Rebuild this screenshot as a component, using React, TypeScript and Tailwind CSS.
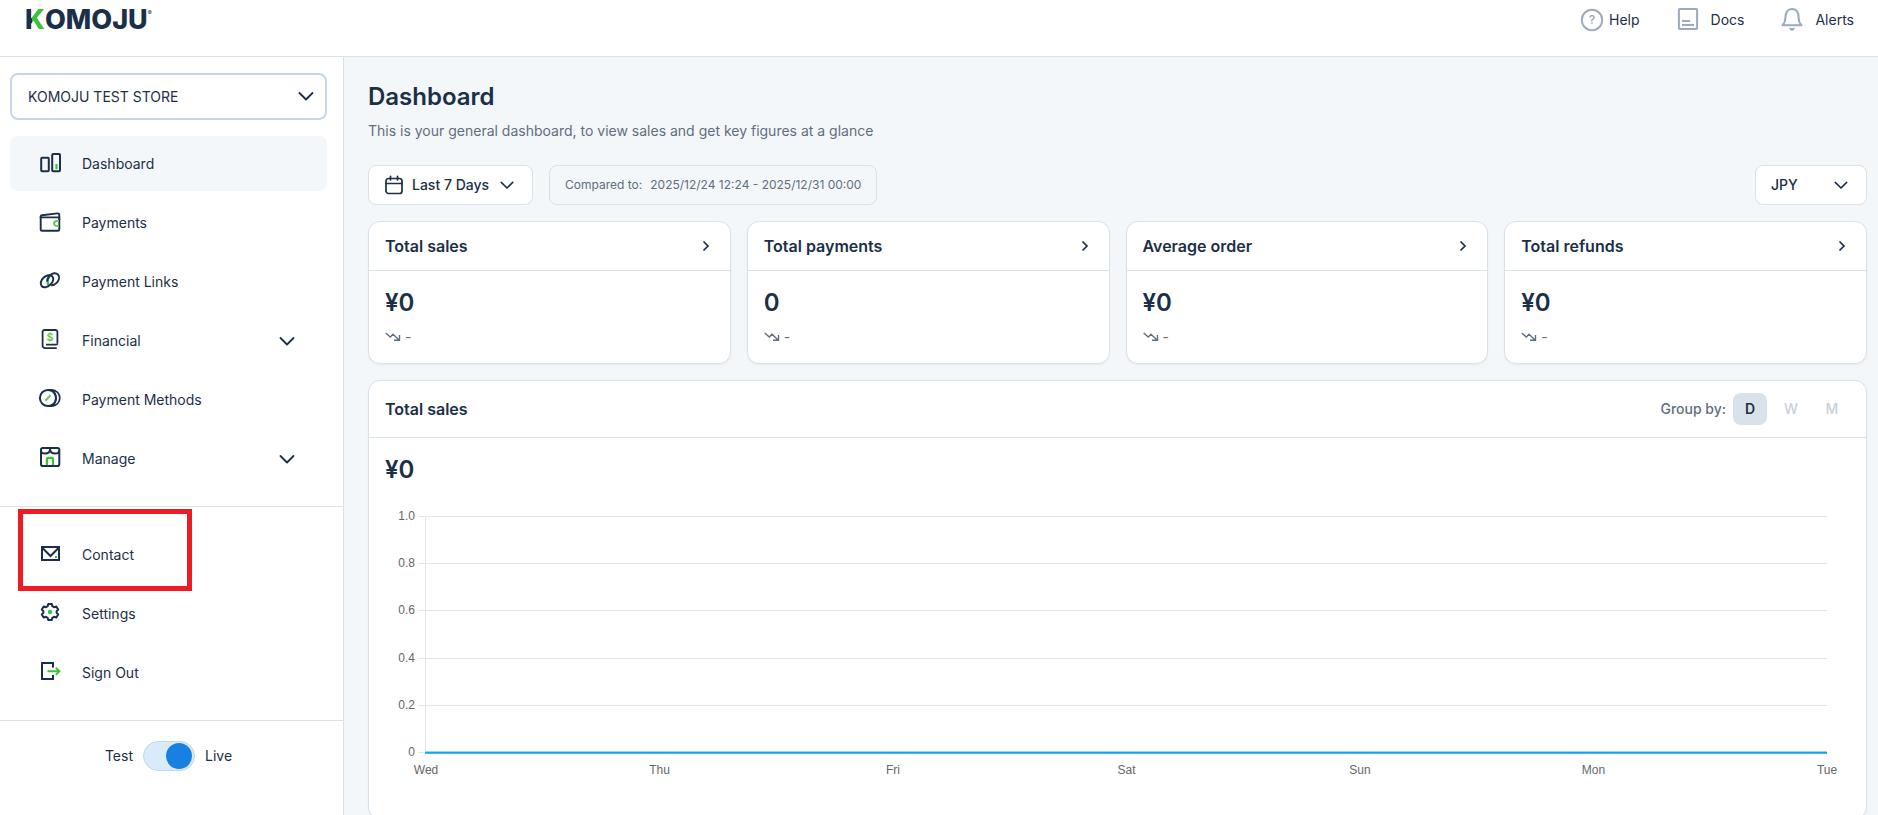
import React, { useState } from 'react';

const NAVY = '#1b2f48';
const GREEN = '#3cc13b';

interface IconProps {
  className?: string;
}

const ChevronDown: React.FC<IconProps> = ({ className }) => (
  <svg className={className} viewBox="0 0 16 16" fill="none" stroke="currentColor" strokeWidth="1.8" strokeLinecap="round" strokeLinejoin="round" aria-hidden="true">
    <path d="M1.500 5L8 11.500 14.500 5" />
  </svg>
);

const NavSvg: React.FC<{ children: React.ReactNode }> = ({ children }) => (
  <svg className="h-6 w-6 shrink-0" viewBox="0 0 24 24" fill="none" stroke={NAVY} strokeWidth="2" aria-hidden="true">
    {children}
  </svg>
);

const DashboardIcon = () => (
  <NavSvg>
    <rect x="3.2" y="6.8" width="7.6" height="13.4" rx="1" />
    <rect x="14.2" y="3" width="7.8" height="17.2" rx="1" />
    <path d="M18.500 13v5.200" stroke={GREEN} strokeWidth="2.200" />
  </NavSvg>
);

const PaymentsIcon = () => (
  <NavSvg>
    <path d="M2.700 7.400v12a1.400 1.400 0 0 0 1.400 1.400h15.800a1.400 1.400 0 0 0 1.400-1.400V8.800a1.400 1.400 0 0 0-1.400-1.400z" strokeWidth="1.900" />
    <path d="M2.700 8.200V6.600c0-.7.500-1.200 1.200-1.300L19.600 3.400c1-.1 1.700.5 1.700 1.400v5" strokeWidth="1.900" />
    <path d="M21 10.900h-2.400a2.500 2.500 0 0 0 0 5H21" stroke="#6cc651" />
  </NavSvg>
);

const LinksIcon = () => (
  <NavSvg>
    <path d="M10.600 8.200c-1.200 1.900-1.500 5.600.3 8.200" stroke="#35c567" strokeWidth="2.600" />
    <ellipse cx="9" cy="12.200" rx="7.200" ry="4.900" transform="rotate(-42 9 12.200)" />
    <path d="M13.200 16.300c2 .1 4-.9 5.700-2.700 2.300-2.500 2.900-6 1.100-8-1.900-2.100-5.500-1.600-8 .9-1.900 1.900-2.900 4.200-2.700 6.200" />
  </NavSvg>
);

const FinancialIcon = () => (
  <NavSvg>
    <path d="M19.400 15.200V3.800A1.800 1.800 0 0 0 17.600 2H6.400a1.800 1.800 0 0 0-1.800 1.800v13.900a2.500 2.500 0 0 0 2.500 2.500h11.700" strokeWidth="1.800" />
    <path d="M8 16.700h10c.8 0 1.400-.6 1.400-1.500" strokeWidth="1.800" />
    <text x="12" y="12.800" textAnchor="middle" fontFamily="Inter, sans-serif" fontSize="10.500" fontWeight="700" fill="#6cc651" stroke="none">$</text>
  </NavSvg>
);

const MethodsIcon = () => (
  <NavSvg>
    <circle cx="10" cy="11" r="8.100" />
    <path d="M10 2.900h3.700a8.100 8.100 0 0 1 0 16.200H10M14.300 3.400c2.300 1.500 3.500 4.200 3.500 7.600s-1.200 6.100-3.500 7.600" strokeWidth="1.700" />
    <path d="M7.300 13.700L12.500 8.300" stroke="#6cc651" />
  </NavSvg>
);

const ManageIcon = () => (
  <NavSvg>
    <rect x="3" y="2" width="18.300" height="18" rx="1.800" />
    <path d="M3 4.500c0 2 1.600 3 3.900 3 3 0 5.200-1.700 5.200-4.500 0 2.800 2.200 4.500 5.200 4.500 2.300 0 4-1 4-3" />
    <path d="M8.900 20v-7.100c0-.6.500-1.100 1.100-1.100h3.900c.6 0 1.100.5 1.100 1.100V20" stroke={GREEN} strokeWidth="2.200" />
    <path d="M4 20h16" />
  </NavSvg>
);

const ContactIcon = () => (
  <NavSvg>
    <rect x="4" y="5" width="17" height="13" />
    <path d="M4.500 6l8 8 8-8" />
    <rect x="17" y="14" width="2" height="2" fill={GREEN} stroke="none" />
  </NavSvg>
);

const SettingsIcon = () => (
  <NavSvg>
    <path
      d="M10.200 3h3.600l.5 2.200 1.700 1 2.300-.8 1.900 3.200-1.600 1.700v1.400l1.600 1.700-1.900 3.200-2.300-.8-1.700 1-.5 2.200h-3.600l-.5-2.200-1.700-1-2.300.8-1.900-3.200 1.600-1.700v-1.400L3.800 8.600l1.900-3.200 2.300.8 1.700-1z"
      strokeLinejoin="round"
    />
    <circle cx="12" cy="11" r="2.200" fill={GREEN} stroke="none" />
  </NavSvg>
);

const SignOutIcon = () => (
  <NavSvg>
    <path d="M15 7.500V3H4v16h11v-4" />
    <path d="M9.500 11.300H21M17.800 7.700l3.600 3.600-3.600 3.600" stroke={GREEN} strokeWidth="1.900" />
  </NavSvg>
);

const mainNav = [
  { label: 'Dashboard', icon: DashboardIcon, active: true },
  { label: 'Payments', icon: PaymentsIcon },
  { label: 'Payment Links', icon: LinksIcon },
  { label: 'Financial', icon: FinancialIcon, expandable: true },
  { label: 'Payment Methods', icon: MethodsIcon },
  { label: 'Manage', icon: ManageIcon, expandable: true },
];

const accountNav = [
  { label: 'Contact', icon: ContactIcon, highlighted: true },
  { label: 'Settings', icon: SettingsIcon },
  { label: 'Sign Out', icon: SignOutIcon },
];

interface NavItemProps {
  label: string;
  icon: React.FC;
  active?: boolean;
  expandable?: boolean;
  highlighted?: boolean;
}

const NavItem: React.FC<NavItemProps> = ({ label, icon: Icon, active, expandable, highlighted }) => {
  const classes = `flex w-full items-start gap-5 rounded-lg pt-[15px] pr-8 pb-[14px] pl-7 text-left text-sm leading-[26px] ${active ? 'bg-[#f3f7fa]' : ''}`;
  return (
    <li className="relative">
      {expandable ? (
        <button type="button" className={classes}>
          <Icon />
          <span className="flex-1">{label}</span>
          <ChevronDown className="h-4 w-4 self-center" />
        </button>
      ) : (
        <a href="#" className={classes}>
          <Icon />
          <span>{label}</span>
        </a>
      )}
      {highlighted && (
        <span className="pointer-events-none absolute -top-[18px] left-2 h-[82px] w-[174px] border-[5px] border-[#ed1c24]"></span>
      )}
    </li>
  );
};

const Sidebar = () => {
  const [live, setLive] = useState(true);

  return (
    <aside className="w-[344px] shrink-0 border-r border-[#d8e2eb] bg-white">
      <div className="pt-4 pr-4 pl-[10px]">
        <div className="relative">
          <select aria-label="Store" className="h-[47px] w-full appearance-none rounded-lg border-2 border-[#c8d5e2] bg-white px-4 text-sm">
            <option>KOMOJU TEST STORE</option>
          </select>
          <ChevronDown className="pointer-events-none absolute top-[15px] right-[13px] h-4 w-4" />
        </div>
      </div>
      <ul className="space-y-1 pt-4 pr-4 pb-5 pl-[10px]">
        {mainNav.map((item) => <NavItem key={item.label} {...item} />)}
      </ul>
      <ul className="space-y-1 border-t border-[#d8e2eb] pt-5 pr-4 pb-5 pl-[10px]">
        {accountNav.map((item) => <NavItem key={item.label} {...item} />)}
      </ul>
      <div className="flex items-center justify-center gap-[10px] border-t border-[#d8e2eb] pt-5 pr-[6px] text-sm">
        <span>Test</span>
        <input
          type="checkbox"
          role="switch"
          aria-label="Live mode"
          checked={live}
          onChange={(e) => setLive(e.target.checked)}
          className="h-[30px] w-[52px] appearance-none rounded-full border border-[#c8d5e2] bg-[#d9eafa] p-px before:block before:h-[26px] before:w-[26px] before:rounded-full before:bg-[#1880e0] checked:before:ml-[21px]"
        />
        <span>Live</span>
      </div>
    </aside>
  );
};

const Header = () => (
  <header className="flex h-[57px] shrink-0 items-start justify-between border-b border-[#d8e2eb] bg-white pr-6 pl-[25px]">
    <a href="#" aria-label="KOMOJU" className="flex text-[27px] leading-10 font-extrabold">
      <span className="bg-linear-to-r from-[#1b2f48] from-35% to-[#3cc13b] to-35% bg-clip-text text-transparent">K</span>
      <span>OMOJU</span>
      <span className="pt-[5px] text-[6px] leading-4">®</span>
    </a>
    <nav className="flex items-center gap-9 pt-2 text-sm leading-6">
      <a href="#" className="flex items-center gap-[5px]">
        <svg className="h-6 w-6" viewBox="0 0 24 24" fill="none" stroke="#9cabbb" strokeWidth="1.900" aria-hidden="true">
          <circle cx="12" cy="12" r="10.200" />
          <text x="12" y="16.200" textAnchor="middle" fontFamily="Inter, sans-serif" fontSize="12" fontWeight="600" fill="#9cabbb" stroke="none">?</text>
        </svg>
        Help
      </a>
      <a href="#" className="flex items-center gap-[11px]">
        <svg className="h-6 w-6" viewBox="0 0 24 24" fill="none" stroke="#9cabbb" strokeWidth="2" aria-hidden="true">
          <rect x="2.900" y="1" width="18.200" height="20" rx=".8" />
          <path d="M6 13h8M6 17h12" />
        </svg>
        Docs
      </a>
      <a href="#" className="flex items-center gap-[11px]">
        <svg className="h-6 w-6" viewBox="0 0 24 24" fill="none" stroke="#9cabbb" strokeWidth="2" aria-hidden="true">
          <path d="M2.500 17.200c2-1.900 2.900-3.600 2.900-7.400C5.400 4.400 7.700 1 12 1s6.600 3.400 6.600 8.800c0 3.800.9 5.500 2.900 7.400z" strokeLinejoin="round" />
          <path d="M9 20h6l-1.500 2.500h-3z" fill="#9cabbb" stroke="none" />
        </svg>
        Alerts
      </a>
    </nav>
  </header>
);

const stats = [
  { title: 'Total sales', value: '¥0' },
  { title: 'Total payments', value: '0' },
  { title: 'Average order', value: '¥0' },
  { title: 'Total refunds', value: '¥0' },
];

const StatCard: React.FC<{ title: string; value: string }> = ({ title, value }) => (
  <section className="rounded-xl border border-[#d8e2eb] bg-white shadow-xs">
    <a href="#" className="flex h-[49px] items-center justify-between border-b border-[#d8e2eb] pr-4 pl-4 font-semibold">
      {title}
      <svg className="h-4 w-4" viewBox="0 0 16 16" fill="none" stroke="currentColor" strokeWidth="1.700" aria-hidden="true">
        <path d="M5.500 3.500L10 8l-4.500 4.500" />
      </svg>
    </a>
    <div className="px-4 pt-4 pb-4">
      <p className="text-2xl leading-8 font-semibold">{value}</p>
      <p className="mt-2 flex items-center gap-1 text-sm leading-5 text-[#5f6e80]">
        <svg className="h-4 w-4" viewBox="0 0 16 16" fill="none" stroke="currentColor" strokeWidth="1.400" aria-hidden="true">
          <path d="M.7 4l4.600 4 2.700-2.800 5.800 5.500M14.500 6v5.300H9" />
        </svg>
        -
      </p>
    </div>
  </section>
);

const yTicks = ['1.0', '0.8', '0.6', '0.4', '0.2', '0'];
const xTicks = ['Wed', 'Thu', 'Fri', 'Sat', 'Sun', 'Mon', 'Tue'];
const gridLines = [0, 47, 94, 142, 189, 236];

const SalesChart = () => (
  <div className="pr-[39px] pl-6 font-['Liberation_Sans',Arial,sans-serif] text-xs leading-4 text-[#666666]">
    <div className="flex gap-[3px]">
      <div className="-my-2 flex h-[252px] w-[22px] flex-col justify-between text-right">
        {yTicks.map((tick) => <span key={tick}>{tick}</span>)}
      </div>
      <svg className="h-[239px] min-w-0 flex-1" aria-hidden="true">
        {gridLines.map((y) => <rect key={y} x="0" y={y} width="100%" height="1" fill="#e5e5e5" />)}
        <rect x="7" y="0" width="1" height="237" fill="#e5e5e5" />
        <svg x="7" y="235" width="100%" height="3">
          <rect width="100%" height="1" fill="#9fd0ee" />
          <rect y="1" width="100%" height="1" fill="#0ea5e9" />
          <rect y="2" width="100%" height="1" fill="#3db8f0" />
        </svg>
      </svg>
    </div>
    <div className="mt-[7px] ml-[33px] flex justify-between">
      {xTicks.map((tick) => (
        <span key={tick} className="flex w-0 justify-center">{tick}</span>
      ))}
    </div>
  </div>
);

const App: React.FC = () => {
  const [groupBy, setGroupBy] = useState('D');

  return (
    <div className="flex h-screen flex-col overflow-hidden bg-[#f3f7fa] font-[Inter,sans-serif] text-[#1b2f48]">
      <Header />
      <div className="flex min-h-0 flex-1">
        <Sidebar />
        <main className="min-w-0 flex-1 overflow-y-auto pt-6 pr-[11px] pb-6 pl-6 [scrollbar-width:none]">
          <h1 className="text-2xl leading-8 font-semibold">Dashboard</h1>
          <p className="mt-2 text-sm leading-5 text-[#5f6e80]">This is your general dashboard, to view sales and get key figures at a glance</p>

          <div className="mt-6 flex items-center gap-4">
            <button type="button" className="flex h-10 items-center gap-2 rounded-lg border border-[#d8e2eb] bg-white pr-[18px] pl-[15px] text-sm font-medium">
              <svg className="h-5 w-5" viewBox="0 0 20 20" fill="none" stroke="currentColor" strokeWidth="1.700" strokeLinecap="round" aria-hidden="true">
                <rect x="2" y="3.500" width="16" height="15" rx="2.500" />
                <path d="M2 8.500h16M6.500 1.300v3.500M13.500 1.300v3.500" />
              </svg>
              Last 7 Days
              <ChevronDown className="ml-[3px] h-[14px] w-[14px]" />
            </button>
            <p className="flex h-10 items-center gap-2 rounded-lg border border-[#d8e2eb] px-[15px] text-xs text-[#5f6e80]">
              <span>Compared to:</span>
              <span>2025/12/24 12:24 - 2025/12/31 00:00</span>
            </p>
            <div className="relative ml-auto">
              <select aria-label="Currency" className="h-10 w-28 appearance-none rounded-lg border border-[#d8e2eb] bg-white px-[15px] text-sm font-medium">
                <option>JPY</option>
              </select>
              <ChevronDown className="pointer-events-none absolute top-[13px] right-[19px] h-[14px] w-[14px]" />
            </div>
          </div>

          <div className="mt-4 grid grid-cols-4 gap-4">
            {stats.map((stat) => <StatCard key={stat.title} {...stat} />)}
          </div>

          <section className="mt-4 rounded-xl border border-[#d8e2eb] bg-white pb-10 shadow-xs">
            <div className="flex h-[57px] items-center justify-between border-b border-[#d8e2eb] pr-[17px] pl-4">
              <h2 className="font-semibold">Total sales</h2>
              <div className="flex items-center gap-[7px] text-sm font-medium">
                <span className="text-[#5f6e80]">Group by:</span>
                {['D', 'W', 'M'].map((unit) => (
                  <button
                    key={unit}
                    type="button"
                    aria-pressed={groupBy === unit}
                    onClick={() => setGroupBy(unit)}
                    className={`h-8 w-[34px] rounded-lg ${groupBy === unit ? 'bg-[#d8e2eb] font-semibold' : 'text-[#c9d0d8]'}`}
                  >
                    {unit}
                  </button>
                ))}
              </div>
            </div>
            <p className="px-4 pt-4 pb-[30px] text-2xl leading-8 font-semibold">¥0</p>
            <SalesChart />
          </section>
        </main>
      </div>
    </div>
  );
};

export default App;
